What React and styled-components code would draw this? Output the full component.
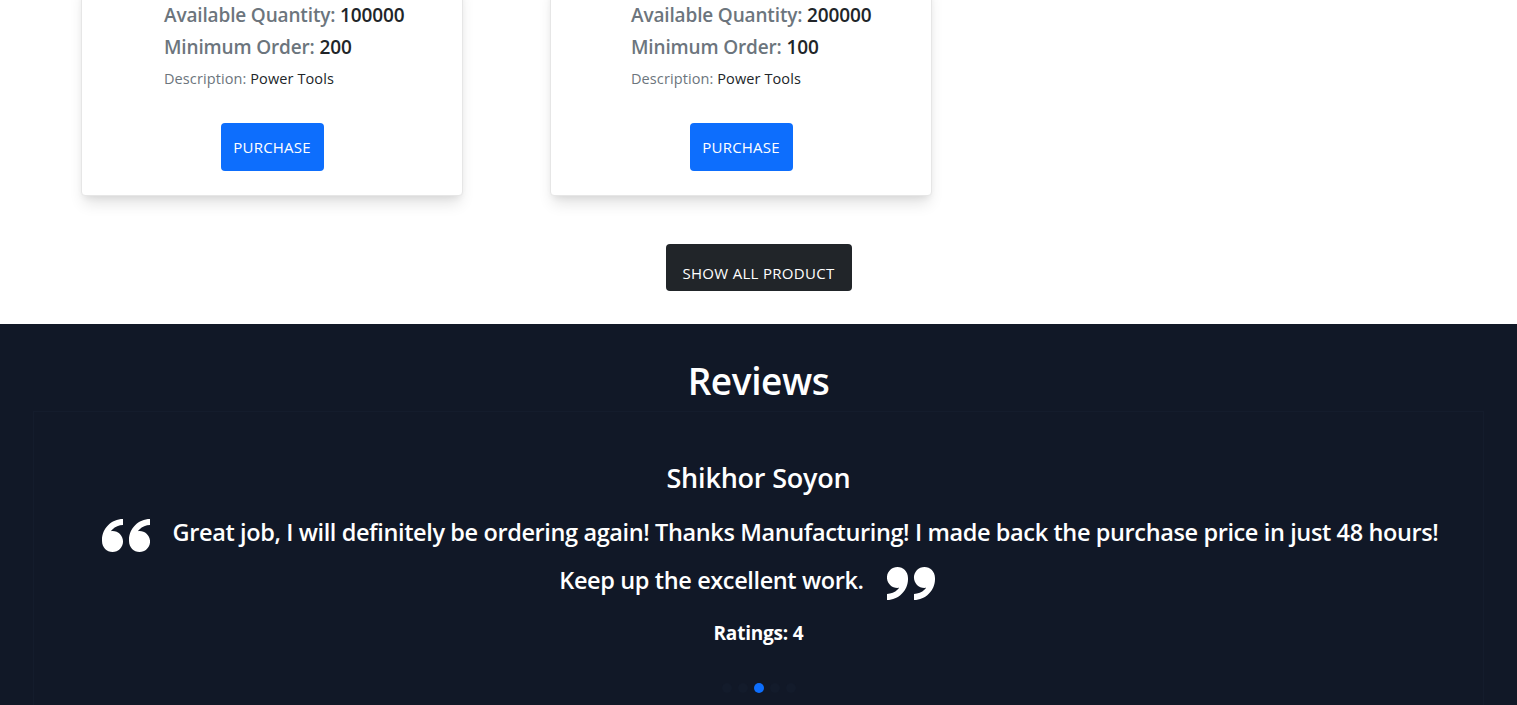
import React from "react";
import styled, { createGlobalStyle } from "styled-components";

const GlobalStyle = createGlobalStyle`
  body {
    margin: 0;
    font-family: "Open Sans", "Noto Sans", sans-serif;
    background: #fff;
    overflow: hidden;
  }
  * { box-sizing: border-box; }
`;

const ProductSection = styled.section`
  padding: 0 0 0 81px;
`;

const CardGrid = styled.div`
  display: grid;
  grid-template-columns: repeat(3, 382px);
  column-gap: 87px;
  margin-top: -18px;
`;

const Card = styled.div`
  background: #fff;
  border: 1px solid #e6e6e6;
  border-radius: 4px;
  box-shadow: 0 10px 15px -3px rgba(0, 0, 0, 0.12), 0 4px 6px -2px rgba(0, 0, 0, 0.06);
  padding: 20px 0 24px;
  display: flex;
  flex-direction: column;
`;

const Info = styled.p`
  margin: 0 0 8px;
  padding-left: ${(p) => p.$indent}px;
  font-size: ${(p) => (p.$small ? "14.5px" : "19px")};
  line-height: 24px;
  font-weight: ${(p) => (p.$small ? 400 : 600)};
  color: #6c757d;
  letter-spacing: ${(p) => (p.$small ? "0.1px" : "-0.15px")};

  span {
    color: #212529;
  }
`;

const PurchaseButton = styled.button`
  align-self: center;
  margin-top: 24px;
  width: 103px;
  height: 48px;
  border: none;
  border-radius: 4px;
  background: #0d6efd;
  color: #fff;
  font-family: inherit;
  font-size: 15px;
  letter-spacing: 0.2px;
  cursor: pointer;
`;

const ShowAllRow = styled.div`
  display: flex;
  justify-content: center;
  padding: 48px 0 33px;
`;

const ShowAllButton = styled.button`
  width: 186px;
  height: 47px;
  padding-top: 12px;
  border: none;
  border-radius: 4px;
  background: #212529;
  color: #fff;
  font-family: inherit;
  font-size: 15px;
  letter-spacing: 0.3px;
  cursor: pointer;
`;

const ReviewSection = styled.section`
  background: #111827;
  color: #fff;
  height: 400px;
  padding-top: 31px;
`;

const Title = styled.h2`
  margin: 0;
  text-align: center;
  font-size: 37px;
  line-height: 52px;
  font-weight: 600;
  letter-spacing: -0.4px;
`;

const Carousel = styled.div`
  margin: 4px 33px 0;
  border: 1px solid #141c2c;
  border-bottom: none;
  padding: 46px 30px 0;
  height: 320px;
  display: flex;
  flex-direction: column;
  align-items: center;
`;

const Name = styled.h3`
  margin: 0;
  font-size: 27px;
  line-height: 40px;
  font-weight: 600;
  letter-spacing: -0.2px;
`;

const Quote = styled.p`
  margin: 10px 0 0;
  max-width: 1380px;
  text-align: center;
  font-size: 23.5px;
  line-height: 48px;
  font-weight: 600;
  letter-spacing: -0.38px;
`;

const MarkSvg = styled.svg`
  width: 48px;
  height: 33px;
  margin: 0 23px;
  vertical-align: -11px;
  fill: #fff;
`;

const markPath =
  "M3.516 7c1.933 0 3.5 1.567 3.5 3.5s-1.567 3.5-3.5 3.5-3.5-1.567-3.5-3.5l-0.016-0.5c0-3.866 3.134-7 7-7v2c-1.336 0-2.591 0.52-3.536 1.464-0.182 0.182-0.348 0.375-0.497 0.578 0.179-0.028 0.362-0.043 0.548-0.043zM12.516 7c1.933 0 3.5 1.567 3.5 3.5s-1.567 3.5-3.5 3.5-3.5-1.567-3.5-3.5l-0.016-0.5c0-3.866 3.134-7 7-7v2c-1.336 0-2.591 0.52-3.536 1.464-0.182 0.182-0.348 0.375-0.497 0.578 0.179-0.028 0.362-0.043 0.548-0.043z";

function QuoteMark({ flip }) {
  return (
    <MarkSvg viewBox="0 3 16 11" preserveAspectRatio="none">
      <path d={markPath} transform={flip ? "rotate(180 8 8.5)" : undefined} />
    </MarkSvg>
  );
}

const Rating = styled.p`
  margin: 15px 0 0;
  font-size: 19px;
  line-height: 28px;
  font-weight: 700;
  letter-spacing: -0.2px;
`;

const Dots = styled.div`
  display: flex;
  gap: 6px;
  margin-top: 36px;
`;

const Dot = styled.span`
  width: 10px;
  height: 10px;
  border-radius: 50%;
  background: ${(p) => (p.$active ? "#0d6efd" : "#131b2b")};
`;

const products = [
  { qty: 100000, min: 200, desc: "Power Tools", indent: 82 },
  { qty: 200000, min: 100, desc: "Power Tools", indent: 80 },
];

export default function App() {
  return (
    <>
      <GlobalStyle />
      <ProductSection>
        <CardGrid>
          {products.map((p, i) => (
            <Card key={i}>
              <Info $indent={p.indent}>
                Available Quantity: <span>{p.qty}</span>
              </Info>
              <Info $indent={p.indent}>
                Minimum Order: <span>{p.min}</span>
              </Info>
              <Info $indent={p.indent} $small>
                Description: <span>{p.desc}</span>
              </Info>
              <PurchaseButton>PURCHASE</PurchaseButton>
            </Card>
          ))}
        </CardGrid>
      </ProductSection>
      <ShowAllRow>
        <ShowAllButton>SHOW ALL PRODUCT</ShowAllButton>
      </ShowAllRow>
      <ReviewSection>
        <Title>Reviews</Title>
        <Carousel>
          <Name>Shikhor Soyon</Name>
          <Quote>
            <QuoteMark />
            Great job, I will definitely be ordering again! Thanks Manufacturing! I made back
            the purchase price in just 48 hours! Keep up the excellent work.
            <QuoteMark flip />
          </Quote>
          <Rating>Ratings: 4</Rating>
          <Dots>
            {[0, 1, 2, 3, 4].map((d) => (
              <Dot key={d} $active={d === 2} />
            ))}
          </Dots>
        </Carousel>
      </ReviewSection>
    </>
  );
}
